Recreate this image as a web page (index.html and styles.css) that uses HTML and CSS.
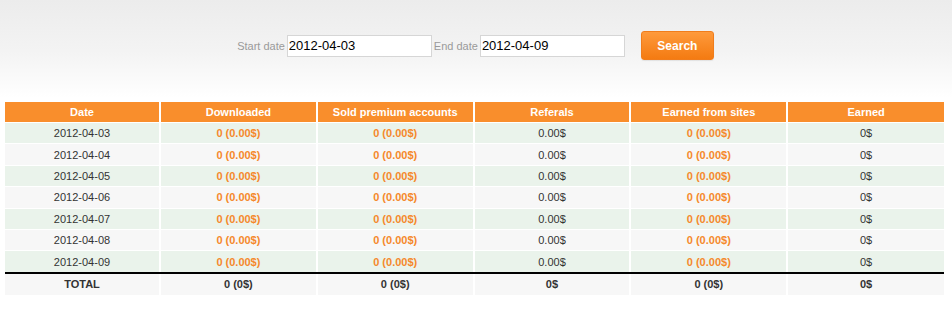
FILE: index.html
```html
<!DOCTYPE html>
<html>
<head>
<meta charset="utf-8">
<link rel="stylesheet" href="styles.css">
</head>
<body>
<div class="top">
  <form class="filter">
    <label class="lbl">Start date</label>
    <input class="date" type="text" value="2012-04-03">
    <label class="lbl">End date</label>
    <input class="date" type="text" value="2012-04-09">
    <button class="btn" type="button">Search</button>
  </form>
</div>
<table class="stats">
  <colgroup>
    <col class="cfirst"><col><col><col><col><col>
  </colgroup>
  <thead>
    <tr><th>Date</th><th>Downloaded</th><th>Sold premium accounts</th><th>Referals</th><th>Earned from sites</th><th>Earned</th></tr>
  </thead>
  <tbody>
    <tr class="g"><td>2012-04-03</td><td class="o">0 (0.00$)</td><td class="o">0 (0.00$)</td><td>0.00$</td><td class="o">0 (0.00$)</td><td>0$</td></tr>
    <tr class="w"><td>2012-04-04</td><td class="o">0 (0.00$)</td><td class="o">0 (0.00$)</td><td>0.00$</td><td class="o">0 (0.00$)</td><td>0$</td></tr>
    <tr class="g"><td>2012-04-05</td><td class="o">0 (0.00$)</td><td class="o">0 (0.00$)</td><td>0.00$</td><td class="o">0 (0.00$)</td><td>0$</td></tr>
    <tr class="w"><td>2012-04-06</td><td class="o">0 (0.00$)</td><td class="o">0 (0.00$)</td><td>0.00$</td><td class="o">0 (0.00$)</td><td>0$</td></tr>
    <tr class="g"><td>2012-04-07</td><td class="o">0 (0.00$)</td><td class="o">0 (0.00$)</td><td>0.00$</td><td class="o">0 (0.00$)</td><td>0$</td></tr>
    <tr class="w"><td>2012-04-08</td><td class="o">0 (0.00$)</td><td class="o">0 (0.00$)</td><td>0.00$</td><td class="o">0 (0.00$)</td><td>0$</td></tr>
    <tr class="g last"><td>2012-04-09</td><td class="o">0 (0.00$)</td><td class="o">0 (0.00$)</td><td>0.00$</td><td class="o">0 (0.00$)</td><td>0$</td></tr>
  </tbody>
  <tfoot>
    <tr class="total"><td>TOTAL</td><td>0 (0$)</td><td>0 (0$)</td><td>0$</td><td>0 (0$)</td><td>0$</td></tr>
  </tfoot>
</table>
</body>
</html>
```
FILE: styles.css
```css
html, body {
  margin: 0;
  padding: 0;
  background: #fff;
  font-family: "Liberation Sans", Arial, sans-serif;
}
.top {
  height: 102px;
  background: linear-gradient(to bottom, #ececec 0%, #f3f3f3 50%, #ffffff 96%);
  box-sizing: border-box;
  padding-top: 31px;
}
.filter {
  display: flex;
  align-items: center;
  justify-content: center;
  margin: 0;
  padding-right: 1px;
}
.lbl {
  font-size: 11px;
  color: #9a9a9a;
  margin-right: 2px;
}
.date {
  width: 145px;
  height: 22px;
  box-sizing: border-box;
  border: 1px solid #d6d6d6;
  background: #fff;
  font-family: "Liberation Sans", Arial, sans-serif;
  font-size: 13px;
  color: #000;
  padding: 0 1px;
  margin: 0 2px 0 0;
  outline: none;
}
.btn {
  margin-left: 14px;
  width: 73px;
  height: 29px;
  border: 1px solid #f07d1c;
  border-radius: 3px;
  background: linear-gradient(to bottom, #fe9a3c 0%, #f98a26 50%, #f47b12 100%);
  color: #fff;
  font-family: "Liberation Sans", Arial, sans-serif;
  font-weight: bold;
  font-size: 12px;
  padding: 0;
  box-shadow: 0 1px 1px rgba(0,0,0,0.08);
}
.stats {
  width: 939px;
  margin-left: 5px;
  border-collapse: collapse;
  font-size: 11px;
  table-layout: fixed;
}
.stats col.cfirst { width: 155px; }
.stats th {
  background: #f98e2c;
  color: #fff;
  font-weight: bold;
  height: 20px;
  padding: 0;
  text-align: center;
  border-left: 2px solid #fff;
}
.stats th:first-child,
.stats td:first-child { border-left: 0; }
.stats td {
  text-align: center;
  color: #333;
  height: 20.4px;
  padding: 0;
  border-left: 2px solid #fff;
  border-top: 1px solid #fff;
}
.stats tr.g td { background: #eaf3eb; }
.stats tr.w td { background: #f7f7f7; }
.stats td.o { color: #f5892b; font-weight: bold; }
.stats tr.last td { border-bottom: 2px solid #000; }
.stats tr.total td {
  background: #f7f7f7;
  font-weight: bold;
  color: #333;
  height: 21px;
  border-top: 0;
}
```
